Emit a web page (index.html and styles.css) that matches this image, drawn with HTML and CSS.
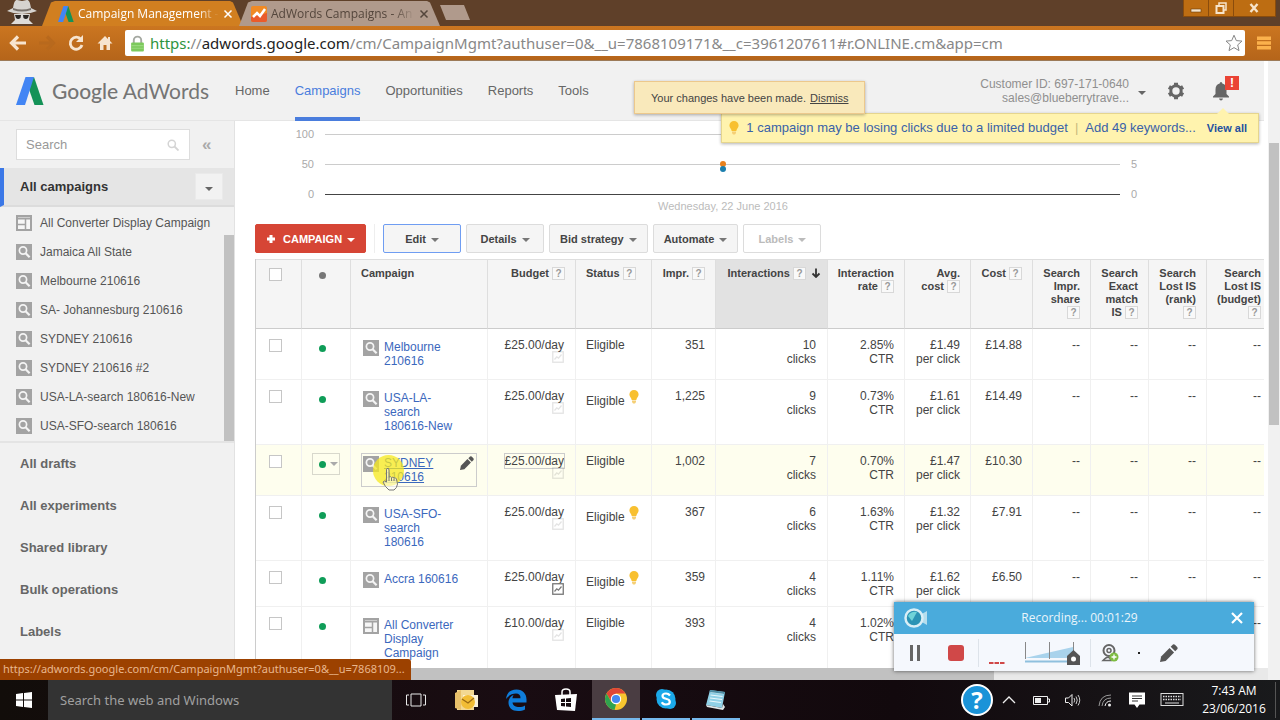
FILE: index.html
```html
<!DOCTYPE html>
<html lang="en">
<head>
  <meta charset="UTF-8">
  <title>Campaign Management - Google AdWords</title>
  <link rel="stylesheet" href="styles.css">
</head>
<body>
  <!-- shared icons -->
  <svg class="sprite" aria-hidden="true">
    <symbol id="i-search" viewBox="0 0 16 16"><rect width="16" height="16" fill="#a3a3a3"/><circle cx="7" cy="6.5" r="3.6" fill="none" stroke="#f4f4f4" stroke-width="1.7"/><path d="M9.6 9.2L13.6 13.2" stroke="#f4f4f4" stroke-width="2.2"/></symbol>
    <symbol id="i-display" viewBox="0 0 16 16"><rect x="1" y="1" width="14" height="14" fill="#f6f6f6" stroke="#a3a3a3" stroke-width="2"/><path d="M1 3.5H15" stroke="#a3a3a3" stroke-width="2"/><path d="M9.5 4V15M2 9.5H9.5" stroke="#a3a3a3" stroke-width="1.5"/></symbol>
    <symbol id="i-bulb" viewBox="0 0 10 14"><path d="M5 0A4.6 4.6 0 0 1 9.6 4.6C9.6 7 7.6 7.8 7.3 10H2.7C2.4 7.8.4 7 .4 4.6A4.6 4.6 0 0 1 5 0Z" fill="#f8c030"/><path d="M3 10.5H7V12L6 13.5H4L3 12Z" fill="#f5cf75"/></symbol>
    <symbol id="i-chart" viewBox="0 0 12 12"><rect x=".75" y=".75" width="10.5" height="10.5" fill="#fff" stroke="#777" stroke-width="1.3"/><path d="M2.5 8.5L4.8 5.8L6.5 7.2L9.5 3.5" fill="none" stroke="#777" stroke-width="1.2"/></symbol>
    <symbol id="i-adwords" viewBox="0 0 28 28"><path d="M18 0L27.5 28H18.5L11.5 8Z" fill="#149257"/><path d="M9.5 0H18L9 28H0Z" fill="#4285f4"/></symbol>
    <symbol id="i-pencil" viewBox="0 0 16 16"><path d="M0 16L1 11L8.500 3.500L12.500 7.500L5 15Z" fill="#555"/><path d="M9.500 2.500L11.500.500Q12.500 0 13.300.700L15.300 2.700Q16 3.500 15.500 4.500L13.500 6.500Z" fill="#555"/></symbol>
    <symbol id="i-close" viewBox="0 0 10 10"><path d="M1.5 1.5L8.5 8.5M8.5 1.5L1.5 8.5" stroke="currentColor" stroke-width="1.5"/></symbol>
  </svg>

  <!-- browser window -->
  <div class="tabstrip">
    <svg class="incognito" viewBox="0 0 32 24"><path d="M7 8C8 2 9 0 11 0C13 0 14 1 16 1C18 1 19 0 21 0C23 0 24 2 25 8L31 11Q24 14 16 14Q8 14 1 11Z" fill="#d6d3cf"/><path d="M7 10Q16 13 25 10V8Q16 11 7 8Z" fill="#77706a"/><path d="M8 14H24L23 20L27 24H5L9 20Z" fill="#dedbd8"/><path d="M9 15H15L14.5 18Q12 20 10 18ZM17 15H23L22 18Q20 20 17.5 18Z" fill="#2b2724"/></svg>
    <div class="tab active">
      <svg class="tab-icon"><use href="#i-adwords"/></svg>
      <span class="tab-title">Campaign Management -</span>
      <button class="tab-close" aria-label="Close tab"><svg><use href="#i-close"/></svg></button>
    </div>
    <div class="tab">
      <svg class="tab-icon" viewBox="0 0 16 16"><rect width="16" height="16" rx="2" fill="#f08a24"/><path d="M0 11L16 7V14Q16 16 14 16H2Q0 16 0 14Z" fill="#ea5b2b"/><path d="M2 11L6 7L9 10L14 3" fill="none" stroke="#fff" stroke-width="2.5"/></svg>
      <span class="tab-title">AdWords Campaigns - An</span>
      <button class="tab-close" aria-label="Close tab"><svg><use href="#i-close"/></svg></button>
    </div>
    <button class="new-tab" aria-label="New tab"></button>
    <div class="window-buttons">
      <button aria-label="Minimize"><svg viewBox="0 0 12 12"><rect x="1" y="7" width="10" height="3" fill="#f6e4cb" stroke="#6b3c08" stroke-width=".6"/></svg></button>
      <button aria-label="Restore"><svg viewBox="0 0 12 12"><path d="M4 3V1H11V8H9" fill="none" stroke="#f6e4cb" stroke-width="1.5"/><rect x="1.5" y="4" width="7" height="7" fill="none" stroke="#f6e4cb" stroke-width="2"/></svg></button>
      <button class="wide" aria-label="Close"><svg viewBox="0 0 12 12"><path d="M2.5 2L9.5 10M9.5 2L2.5 10" stroke="#f6e4cb" stroke-width="2.4"/></svg></button>
    </div>
  </div>
  <div class="toolbar">
    <button aria-label="Back"><svg viewBox="0 0 18 18"><path d="M9 2.5L2.5 9L9 15.5M3 9H17" fill="none" stroke="#f7e4cf" stroke-width="3.2"/></svg></button>
    <button aria-label="Forward"><svg viewBox="0 0 18 18"><path d="M9 2.5L15.5 9L9 15.5M15 9H1" fill="none" stroke="#b8691d" stroke-width="3.2"/></svg></button>
    <button aria-label="Reload"><svg viewBox="0 0 18 18"><path d="M14 5.5A6 6 0 1 0 15 11" fill="none" stroke="#f7e4cf" stroke-width="2.8"/><path d="M16 1V8H9Z" fill="#f7e4cf"/></svg></button>
    <button aria-label="Home"><svg viewBox="0 0 18 18"><path d="M9 2L1.5 9.5H4V16H7.5V11H10.5V16H14V9.5H16.5L14 7V3H12V5Z" fill="#f7e4cf"/></svg></button>
    <div class="address">
      <svg class="lock" viewBox="0 0 14 16"><path d="M3.5 8V5A3.5 3.5 0 0 1 10.5 5V8" fill="none" stroke="#a5a9a2" stroke-width="1.8"/><rect x="1" y="7" width="12" height="8.5" rx="1" fill="#7cc95c"/><path d="M1 10H13M1 12.5H13" stroke="#98d97d"/></svg>
      <span class="url"><span class="scheme">https:</span>//<b>adwords.google.com</b>/cm/CampaignMgmt?authuser=0&amp;__u=7868109171&amp;__c=3961207611#r.ONLINE.cm&amp;app=cm</span>
      <svg class="star" viewBox="0 0 18 18"><path d="M9 1.2L11.3 6.6L17 7.1L12.7 10.9L14 16.6L9 13.6L4 16.6L5.3 10.9L1 7.1L6.7 6.6Z" fill="#fff" stroke="#888"/></svg>
    </div>
    <button class="menu" aria-label="Menu"><svg viewBox="0 0 16 16"><path d="M0 2.5H16M0 8H16M0 13.5H16" stroke="#fbb14c" stroke-width="4"/></svg></button>
  </div>

  <div class="page">
    <div class="document">
      <div class="app-header">
        <svg class="logo"><use href="#i-adwords"/></svg>
        <div class="brand"><b>Google</b> AdWords</div>
        <nav>
          <a href="#">Home</a>
          <a href="#" class="active">Campaigns</a>
          <a href="#">Opportunities</a>
          <a href="#">Reports</a>
          <a href="#">Tools</a>
        </nav>
        <div class="account">Customer ID: 697-171-0640<br>sales@blueberrytrave...</div>
        <button class="caret-button" aria-label="Switch account"><i class="caret"></i></button>
        <button class="gear" aria-label="Settings"><svg viewBox="0 0 18 18"><circle cx="9" cy="9" r="5.2" fill="none" stroke="#666" stroke-width="3"/><path d="M9 .8V4M9 14V17.2M1.9 4.9L4.7 6.5M13.3 11.5L16.1 13.1M1.9 13.1L4.7 11.5M13.3 6.5L16.1 4.9" stroke="#666" stroke-width="4"/></svg></button>
        <button class="bell" aria-label="Notifications"><svg viewBox="0 0 18 20"><path d="M9 1Q10.3 1 10.3 2.6Q14.5 3.8 14.5 8.5V13L17 15.5V16.5H1V15.5L3.5 13V8.5Q3.5 3.8 7.7 2.6Q7.7 1 9 1Z" fill="#666"/><path d="M7 17.5H11Q10.5 19.5 9 19.5Q7.5 19.5 7 17.5Z" fill="#666"/></svg><span class="badge">!</span></button>
      </div>

      <div class="toast">Your changes have been made. <a href="#">Dismiss</a></div>
      <div class="tip">
        <svg class="bulb"><use href="#i-bulb"/></svg>
        <a href="#">1 campaign may be losing clicks due to a limited budget</a>
        <span class="bar">|</span>
        <a href="#">Add 49 keywords...</a>
        <a href="#" class="view-all">View all</a>
      </div>

      <div class="columns">
        <aside class="sidebar">
          <div class="side-search">
            <label class="search-box">
              <input type="text" placeholder="Search" aria-label="Search">
              <svg viewBox="0 0 12 12"><circle cx="4.8" cy="4.8" r="3.6" fill="none" stroke="#d4d4d4" stroke-width="1.5"/><path d="M7.5 7.5L11.5 11.5" stroke="#d4d4d4" stroke-width="1.8"/></svg>
            </label>
            <button class="collapse" aria-label="Collapse">«</button>
          </div>
          <div class="side-current">
            <span>All campaigns</span>
            <button aria-label="Filter campaigns"><i class="caret"></i></button>
          </div>
          <div class="tree">
            <div class="tree-list">
              <a href="#"><svg><use href="#i-display"/></svg>All Converter Display Campaign</a>
              <a href="#"><svg><use href="#i-search"/></svg>Jamaica All State</a>
              <a href="#"><svg><use href="#i-search"/></svg>Melbourne 210616</a>
              <a href="#"><svg><use href="#i-search"/></svg>SA- Johannesburg 210616</a>
              <a href="#"><svg><use href="#i-search"/></svg>SYDNEY 210616</a>
              <a href="#"><svg><use href="#i-search"/></svg>SYDNEY 210616 #2</a>
              <a href="#"><svg><use href="#i-search"/></svg>USA-LA-search 180616-New</a>
              <a href="#"><svg><use href="#i-search"/></svg>USA-SFO-search 180616</a>
            </div>
            <div class="tree-scroll"></div>
          </div>
          <div class="side-links">
            <a href="#">All drafts</a>
            <a href="#">All experiments</a>
            <a href="#">Shared library</a>
            <a href="#">Bulk operations</a>
            <a href="#">Labels</a>
          </div>
        </aside>

        <main>
          <div class="chart">
            <div class="axis"><span>100</span><i></i><span></span></div>
            <div class="axis"><span>50</span><i></i><span>5</span></div>
            <div class="axis base"><span>0</span><i></i><span>0</span></div>
            <div class="point orange"></div>
            <div class="point blue"></div>
          </div>
          <div class="chart-date">Wednesday, 22 June 2016</div>

          <div class="actions">
            <button class="primary"><svg viewBox="0 0 10 10"><path d="M5 1V9M1 5H9" stroke="#fff" stroke-width="3"/></svg>CAMPAIGN<i class="caret"></i></button>
            <span class="divider"></span>
            <button class="focused">Edit<i class="caret"></i></button>
            <button>Details<i class="caret"></i></button>
            <button>Bid strategy<i class="caret"></i></button>
            <button>Automate<i class="caret"></i></button>
            <button disabled>Labels<i class="caret"></i></button>
          </div>

          <table>
            <colgroup>
              <col class="c-check"><col class="c-dot"><col class="c-name"><col class="c-budget"><col class="c-status"><col class="c-impr"><col class="c-inter"><col class="c-rate"><col class="c-avg"><col class="c-cost"><col class="c-is"><col class="c-is"><col class="c-is"><col>
            </colgroup>
            <thead>
              <tr>
                <th class="check"><input type="checkbox" aria-label="Select all"></th>
                <th class="state"><i class="dot"></i></th>
                <th class="left">Campaign</th>
                <th>Budget <span class="help">?</span></th>
                <th class="left">Status <span class="help">?</span></th>
                <th>Impr. <span class="help">?</span></th>
                <th class="sorted">Interactions <span class="help">?</span> <svg class="arrow" viewBox="0 0 10 10"><path d="M5 .5V9M1.5 5.5L5 9L8.5 5.5" fill="none" stroke="#333" stroke-width="1.8"/></svg></th>
                <th>Interaction<br>rate <span class="help">?</span></th>
                <th>Avg.<br>cost <span class="help">?</span></th>
                <th>Cost <span class="help">?</span></th>
                <th>Search<br>Impr.<br>share<br><span class="help">?</span></th>
                <th>Search<br>Exact<br>match<br>IS <span class="help">?</span></th>
                <th>Search<br>Lost IS<br>(rank)<br><span class="help">?</span></th>
                <th class="last">Search<br>Lost IS<br>(budget)<br><span class="help">?</span></th>
              </tr>
            </thead>
            <tbody>
              <tr>
                <td class="check"><input type="checkbox" aria-label="Melbourne 210616"></td>
                <td class="state"><i class="dot"></i></td>
                <td class="name"><div><svg><use href="#i-search"/></svg><a href="#">Melbourne 210616</a></div></td>
                <td class="budget">£25.00/day<svg class="sim faint"><use href="#i-chart"/></svg></td>
                <td class="left">Eligible</td>
                <td>351</td><td class="clicks">10<br>clicks</td><td>2.85%<br>CTR</td><td>£1.49<br>per click</td><td>£14.88</td>
                <td>--</td><td>--</td><td>--</td><td class="last">--</td>
              </tr>
              <tr>
                <td class="check"><input type="checkbox" aria-label="USA-LA-search 180616-New"></td>
                <td class="state"><i class="dot"></i></td>
                <td class="name"><div><svg><use href="#i-search"/></svg><a href="#">USA-LA-search 180616-New</a></div></td>
                <td class="budget">£25.00/day<svg class="sim faint"><use href="#i-chart"/></svg></td>
                <td class="left">Eligible <svg class="bulb"><use href="#i-bulb"/></svg></td>
                <td>1,225</td><td class="clicks">9<br>clicks</td><td>0.73%<br>CTR</td><td>£1.61<br>per click</td><td>£14.49</td>
                <td>--</td><td>--</td><td>--</td><td class="last">--</td>
              </tr>
              <tr class="hover">
                <td class="check"><input type="checkbox" aria-label="SYDNEY 210616"></td>
                <td class="state"><button aria-label="Change status"><i class="dot"></i><i class="caret"></i></button></td>
                <td class="name">
                  <div><svg><use href="#i-search"/></svg><a href="#">SYDNEY 210616</a><svg class="edit"><use href="#i-pencil"/></svg></div>
                  <span class="spot"></span>
                  <svg class="hand" viewBox="0 0 17 24"><path d="M5 1.5Q7 .5 7 3V10Q8.5 9 9.5 10.5Q11 9.5 12 11Q13.5 10.2 14.5 12L15.5 17Q15 21 12 23H7Q3 20 1 15Q2 13 4.5 15V3Q4.5 2 5 1.5Z" fill="#fff" fill-opacity=".5" stroke="#777"/><path d="M7 10V14M9.5 11V14M12 11.5V14" stroke="#777"/></svg>
                </td>
                <td class="budget"><span class="boxed">£25.00/day</span><svg class="sim faint"><use href="#i-chart"/></svg></td>
                <td class="left">Eligible</td>
                <td>1,002</td><td class="clicks">7<br>clicks</td><td>0.70%<br>CTR</td><td>£1.47<br>per click</td><td>£10.30</td>
                <td>--</td><td>--</td><td>--</td><td class="last">--</td>
              </tr>
              <tr>
                <td class="check"><input type="checkbox" aria-label="USA-SFO-search 180616"></td>
                <td class="state"><i class="dot"></i></td>
                <td class="name"><div><svg><use href="#i-search"/></svg><a href="#">USA-SFO-search 180616</a></div></td>
                <td class="budget">£25.00/day<svg class="sim faint"><use href="#i-chart"/></svg></td>
                <td class="left">Eligible <svg class="bulb"><use href="#i-bulb"/></svg></td>
                <td>367</td><td class="clicks">6<br>clicks</td><td>1.63%<br>CTR</td><td>£1.32<br>per click</td><td>£7.91</td>
                <td>--</td><td>--</td><td>--</td><td class="last">--</td>
              </tr>
              <tr>
                <td class="check"><input type="checkbox" aria-label="Accra 160616"></td>
                <td class="state"><i class="dot"></i></td>
                <td class="name"><div><svg><use href="#i-search"/></svg><a href="#">Accra 160616</a></div></td>
                <td class="budget">£25.00/day<svg class="sim"><use href="#i-chart"/></svg></td>
                <td class="left">Eligible <svg class="bulb"><use href="#i-bulb"/></svg></td>
                <td>359</td><td class="clicks">4<br>clicks</td><td>1.11%<br>CTR</td><td>£1.62<br>per click</td><td>£6.50</td>
                <td>--</td><td>--</td><td>--</td><td class="last">--</td>
              </tr>
              <tr>
                <td class="check"><input type="checkbox" aria-label="All Converter Display Campaign"></td>
                <td class="state"><i class="dot"></i></td>
                <td class="name"><div><svg><use href="#i-display"/></svg><a href="#">All Converter Display Campaign</a></div></td>
                <td class="budget">£10.00/day<svg class="sim faint"><use href="#i-chart"/></svg></td>
                <td class="left">Eligible</td>
                <td>393</td><td class="clicks">4<br>clicks</td><td>1.02%<br>CTR</td><td></td><td></td>
                <td></td><td></td><td></td><td class="last">--</td>
              </tr>
            </tbody>
          </table>
        </main>
      </div>
      <div class="hscroll"><div></div></div>
    </div>
    <div class="vscroll"><div></div></div>
    <div class="status-bubble">https://adwords.google.com/cm/CampaignMgmt?authuser=0&amp;__u=7868109...</div>

    <!-- recorder window -->
    <div class="recorder">
      <div class="rec-title">
        <svg class="rec-logo" viewBox="0 0 24 20"><path d="M16 7L23 3V17L16 13Z" fill="#b5deee"/><circle cx="10" cy="10" r="8.5" fill="#2b93b5" stroke="#d9eef6" stroke-width="2.5"/><path d="M4 8Q7 3 13 4L8 13Z" fill="#6fd3d8"/></svg>
        <span>Recording... 00:01:29</span>
        <button aria-label="Close recorder"><svg viewBox="0 0 12 12"><path d="M1 1L11 11M11 1L1 11" stroke="#fff" stroke-width="2.2"/></svg></button>
      </div>
      <div class="rec-body">
        <button aria-label="Pause"><svg viewBox="0 0 18 18"><path d="M5.5 1V17M12.5 1V17" stroke="#666" stroke-width="3"/></svg></button>
        <button aria-label="Stop"><svg viewBox="0 0 18 18"><rect x="1" y="1" width="16" height="16" rx="3" fill="#d04848"/></svg></button>
        <span class="rec-line"></span>
        <svg class="level" viewBox="0 0 16 4"><path d="M0 2H4.5M5.5 2H10M11 2H15.5" stroke="#d04848" stroke-width="2"/></svg>
        <svg class="volume" viewBox="0 0 56 24"><path d="M0 17L48 6V17Z" fill="#a9d3ec"/><path d="M0 20.5H50" stroke="#8fc0de" stroke-width="2"/><path d="M.5 1V18M24.5 1V18M48.5 1V10" stroke="#888"/><path d="M42 15L48.5 9L55 15V24H42Z" fill="#555"/><circle cx="48.5" cy="18" r="2.5" fill="#fff"/></svg>
        <span class="rec-line"></span>
        <button class="webcam" aria-label="Webcam"><svg viewBox="0 0 18 18"><circle cx="8" cy="6.5" r="5.5" fill="none" stroke="#666" stroke-width="2"/><circle cx="8" cy="6.5" r="2" fill="none" stroke="#666" stroke-width="1.5"/><path d="M2 16.5Q8 10 10 16.5Z" fill="none" stroke="#666" stroke-width="1.5"/><circle cx="13" cy="13" r="4.5" fill="#7dbb42"/><path d="M13 10.5V15.5M10.5 13H15.5" stroke="#fff" stroke-width="1.3"/></svg></button>
        <span class="rec-dot"></span>
        <button aria-label="Draw"><svg><use href="#i-pencil"/></svg></button>
      </div>
    </div>
  </div>

  <!-- windows taskbar -->
  <div class="taskbar">
    <button class="start" aria-label="Start"><svg viewBox="0 0 16 16"><path d="M0 2L7 1V7.5H0ZM8 .9L16 0V7.5H8ZM0 8.5H7V15L0 14ZM8 8.5H16V16L8 15Z" fill="#fff"/></svg></button>
    <input class="win-search" type="text" placeholder="Search the web and Windows" aria-label="Search the web and Windows">
    <button class="app" aria-label="Task view"><svg viewBox="0 0 24 24"><path d="M7 6H17V18H7ZM5 7H2.5V17H5M19 7H21.5V17H19" fill="none" stroke="#e8e8e8"/></svg></button>
    <button class="app" aria-label="Outlook"><svg viewBox="0 0 24 24"><path d="M3 2H20V22H3Z" fill="#f3d892"/><path d="M1 5L7 2V22L1 20Z" fill="#e8c06a"/><path d="M9 7H24V19H9Z" fill="#fbf2da"/><circle cx="14" cy="14" r="7" fill="#f2bd35"/><path d="M8 11L14 15L20 10" fill="none" stroke="#9b6b13" stroke-width="1.3"/></svg></button>
    <button class="app" aria-label="Edge"><svg viewBox="0 0 24 24"><path d="M2 11C3 4 7 1.5 12.5 1.5C19 1.5 22.5 6 22.5 11.5V14.5H8.5C9 18 12 19 15 19C17.5 19 19.5 18.3 21 17.4V21.5C19 22.6 16.5 23 14 23C8 23 4.5 19.5 4.5 14.5C4.5 11 6.5 8.3 9.8 6.8C8.9 8 8.6 9 8.5 10.2H16.5C16.5 7 15 5.5 12 5.5C8 5.5 4.5 7.5 2 11Z" fill="#0f7dda"/></svg></button>
    <button class="app" aria-label="Store"><svg viewBox="0 0 24 24"><path d="M1 7L23 6L21 23L3 22Z" fill="#fff"/><path d="M8 7V4Q8 1 12 1Q16 1 16 4V7" fill="none" stroke="#fff" stroke-width="1.5"/><path d="M7 11L11 10.5V14H7ZM12 10.4L17 10V14H12ZM7 15H11V18.5L7 18ZM12 15H17V19L12 18.6Z" fill="#150c10"/></svg></button>
    <button class="app current" aria-label="Chrome"><svg viewBox="0 0 24 24"><circle cx="12" cy="12" r="11" fill="#f7c52f"/><path d="M2.5 6.5A11 11 0 0 1 21.5 6.5H12L7.2 14.5Z" fill="#e04636"/><path d="M2.5 6.5L7.2 14.7L12 17.5L10.5 22.9A11 11 0 0 1 2.5 6.5Z" fill="#2fa34f"/><circle cx="12" cy="12" r="5.2" fill="#fff"/><circle cx="12" cy="12" r="4.1" fill="#4688f1"/></svg></button>
    <button class="app running" aria-label="Skype"><svg viewBox="0 0 24 24"><circle cx="8" cy="8" r="6" fill="#1ba9e9"/><circle cx="16" cy="16" r="6" fill="#1ba9e9"/><circle cx="12" cy="12" r="9.5" fill="#1ba9e9"/><path d="M16 8.5Q14.5 6.5 12 6.5Q8.5 6.5 8.5 9Q8.5 11 12 11.8Q15.8 12.6 15.8 15Q15.8 17.5 12 17.5Q9 17.5 7.8 15.2" fill="none" stroke="#fff" stroke-width="2.2"/></svg></button>
    <button class="app running" aria-label="Notepad"><svg viewBox="0 0 24 24"><path d="M6 3L21 5L18 21L2 18Z" fill="#8fd0e6"/><path d="M7 5L19 6.5M6.5 8L18.5 9.5M6 11L18 12.5M5.5 14L17 15.5" stroke="#e9f7fb" stroke-width="1.2"/><path d="M6 3L21 5L20.5 7L5.5 5Z" fill="#4d8ca3"/><path d="M2 18L18 21L19 17L21 20L19 23L3 20Z" fill="#dfe8ea"/></svg></button>
    <div class="tray">
      <span class="help-orb">?</span>
      <svg viewBox="0 0 20 20"><path d="M4 13L10 7L16 13" fill="none" stroke="#eee" stroke-width="1.3"/></svg>
      <svg viewBox="0 0 20 20"><path d="M2.5 6.5H16.5V14.5H2.5ZM17 9H18.5V12H17" fill="none" stroke="#eee"/><rect x="4" y="8" width="6" height="5" fill="#eee"/></svg>
      <svg viewBox="0 0 20 20"><path d="M2.5 8H5.5L9 4.5V16L5.5 12.5H2.5Z" fill="none" stroke="#eee"/><path d="M11 8Q12.5 10 11 12.5M13 6.5Q15.5 10 13 14M15 5Q18.5 10 15 15.5" fill="none" stroke="#ccc"/></svg>
      <svg viewBox="0 0 20 20"><g fill="none" stroke="#999"><path d="M4 16Q5 5 16 5"/><path d="M7 16Q8 8 16 8"/><path d="M10 16Q11 11 16 11" stroke="#eee"/></g><circle cx="14.5" cy="15" r="1.5" fill="#eee"/></svg>
      <svg viewBox="0 0 20 20"><path d="M2 2.5H18V14.5H12.5L10 18L7.5 14.5H2Z" fill="#fff"/><path d="M5 6H15M5 8.5H15M5 11H11" stroke="#333"/></svg>
      <svg class="kbd" viewBox="0 0 24 16"><rect x="1" y="1.5" width="22" height="12" fill="none" stroke="#ddd"/><path d="M3 4.5H21M3 7.5H21" stroke="#ddd" stroke-width="1.5" stroke-dasharray="1.5 1"/><path d="M5 11H19" stroke="#ddd"/></svg>
      <div class="clock">7:43 AM<br>23/06/2016</div>
    </div>
  </div>
</body>
</html>
```
FILE: styles.css
```css
* {
  box-sizing: border-box;
}
body {
  margin: 0;
  height: 100vh;
  display: flex;
  flex-direction: column;
  overflow: hidden;
  font-family: "Liberation Sans", Arial, sans-serif;
  font-size: 12px;
  line-height: 14px;
  color: #444;
  background: #fff;
}
button {
  border: 0;
  padding: 0;
  background: none;
  font: inherit;
  color: inherit;
}
a {
  color: inherit;
  text-decoration: none;
}
svg {
  display: block;
  flex: none;
}
.sprite {
  position: absolute;
  width: 0;
  height: 0;
}
.caret {
  display: inline-block;
  border: 4px solid transparent;
  border-top-color: currentColor;
  border-bottom: 0;
}

/* browser */
.tabstrip {
  height: 26px;
  flex: none;
  display: flex;
  align-items: flex-end;
  background: #5f4029;
  font-family: "Open Sans", sans-serif;
}
.incognito {
  width: 32px;
  height: 24px;
  margin: 0 4px 2px 6px;
}
.tab {
  width: 201px;
  height: 25px;
  margin-right: -4px;
  padding: 0 11px 0 12px;
  display: flex;
  align-items: center;
  gap: 4px;
  background: #b09a8c;
  color: #54463c;
  clip-path: polygon(0 100%, 9px 6%, 13px 0, 188px 0, 191px 6%, 100% 100%);
}
.tab.active {
  padding-left: 16px;
  background: #d17f20;
  color: #fff;
}
.tab-icon {
  width: 16px;
  height: 16px;
}
.tab-title {
  flex: 1;
  white-space: nowrap;
  -webkit-mask-image: linear-gradient(to right, #000 85%, transparent);
  mask-image: linear-gradient(to right, #000 85%, transparent);
}
.tab-close svg {
  width: 10px;
  height: 10px;
}
.new-tab {
  width: 30px;
  height: 15px;
  margin: 0 0 6px 4px;
  background: #b09a8c;
  clip-path: polygon(0 0, 24px 0, 100% 100%, 6px 100%);
}
.window-buttons {
  margin: 0 4px 0 auto;
  align-self: flex-start;
  display: flex;
  border: 1px solid #8a4c0c;
  border-top: 0;
}
.window-buttons button {
  width: 25px;
  height: 16px;
  padding: 2px 6px;
  background: #bd6d12;
  border-right: 1px solid #8a4c0c;
}
.window-buttons .wide {
  width: 41px;
  padding: 2px 14px;
  border-right: 0;
}
.window-buttons svg {
  width: 12px;
  height: 12px;
}
.toolbar {
  height: 35px;
  flex: none;
  display: flex;
  align-items: center;
  gap: 11px;
  padding: 0 8px 0 9px;
  background: linear-gradient(#cb7620, #b5651a);
  border-bottom: 1px solid #9c7a58;
}
.toolbar svg {
  width: 18px;
  height: 18px;
}
.address {
  flex: 1;
  height: 26px;
  padding: 0 2px 0 5px;
  display: flex;
  align-items: center;
  gap: 5px;
  background: #fff;
  border-radius: 2px;
  font-family: "Noto Sans", sans-serif;
  font-size: 15px;
  line-height: 24px;
  color: #888;
}
.toolbar .lock {
  width: 15px;
  height: 17px;
}
.address .star {
  margin-left: auto;
}
.url b {
  font-weight: 400;
  color: #222;
}
.scheme {
  color: #2e9440;
}
.url {
  white-space: nowrap;
}
.menu svg {
  width: 16px;
  height: 14px;
}

/* page frame */
.page {
  flex: 1;
  min-height: 0;
  display: flex;
  position: relative;
}
.document {
  flex: 1;
  min-width: 0;
  display: flex;
  flex-direction: column;
}
.vscroll {
  width: 12px;
  padding: 82px 1px 0;
  background: #f1f1f1;
}
.vscroll div {
  height: 282px;
  background: #c1c1c1;
}
.hscroll {
  height: 12px;
  flex: none;
  background: #e9e9e9;
}
.hscroll div {
  width: 994px;
  height: 12px;
  background: #c1c1c1;
}

/* app header */
.app-header {
  height: 60px;
  flex: none;
  margin-right: 4px;
  padding-left: 16px;
  display: flex;
  align-items: center;
  background: #f1f1f1;
  border-bottom: 1px solid #e5e5e5;
  color: #666;
}
.logo {
  width: 28px;
  height: 28px;
}
.brand {
  width: 156px;
  margin: 0 27px 0 8px;
  font-family: Lato, sans-serif;
  font-size: 21px;
  line-height: 28px;
  white-space: nowrap;
  color: #757575;
}
.brand b {
  font-weight: 500;
}
nav {
  display: flex;
  align-self: stretch;
  gap: 25px;
  margin-bottom: -1px;
  font-size: 13px;
}
nav a {
  line-height: 60px;
}
nav .active {
  color: #4a7ddd;
  border-bottom: 4px solid #4a7ddd;
}
.account {
  margin-left: auto;
  text-align: right;
  color: #8f8f8f;
}
.caret-button {
  margin: 0 21px 0 9px;
}
.gear {
  margin-right: 27px;
}
.gear svg {
  width: 18px;
  height: 18px;
}
.bell {
  position: relative;
  margin-right: 34px;
}
.bell svg {
  width: 18px;
  height: 20px;
}
.badge {
  position: absolute;
  top: -5px;
  left: 13px;
  width: 14px;
  height: 14px;
  background: #ea4335;
  color: #fff;
  font-weight: bold;
}
.toast {
  position: absolute;
  top: 20px;
  left: 634px;
  z-index: 2;
  padding: 9px 15px 8px 16px;
  background: #f9e9bb;
  border: 1px solid #ecc88c;
  box-shadow: 0 1px 3px rgba(0, 0, 0, 0.3);
  font-size: 11px;
  color: #444;
}
.toast a {
  margin-left: 1px;
  text-decoration: underline;
}
.tip {
  position: absolute;
  top: 52px;
  right: 21px;
  z-index: 1;
  height: 30px;
  padding: 0 11px 0 7px;
  display: flex;
  align-items: center;
  gap: 7px;
  background: #fff3ae;
  border: 1px solid #e5d58e;
  box-shadow: 0 1px 3px rgba(0, 0, 0, 0.3);
  font-size: 13px;
  color: #3a62a8;
}
.tip::after {
  content: "";
  position: absolute;
  top: -6px;
  right: 29px;
  border: 6px solid transparent;
  border-top: 0;
  border-bottom-color: #fff3ae;
}
.tip .bar {
  color: #c9b97d;
}
.tip .view-all {
  margin-left: 4px;
  font-size: 11px;
  font-weight: bold;
  color: #2450a0;
}
.bulb {
  width: 10px;
  height: 14px;
}

/* sidebar */
.columns {
  flex: 1;
  min-height: 0;
  display: flex;
  overflow: hidden;
}
.sidebar {
  width: 235px;
  flex: none;
  background: #f1f1f1;
  border-right: 1px solid #e2e2e2;
}
.side-search {
  padding: 8px 16px;
  display: flex;
  align-items: center;
}
.search-box {
  width: 174px;
  height: 31px;
  padding: 0 10px 0 9px;
  display: flex;
  align-items: center;
  background: #fff;
  border: 1px solid #ddd;
}
.search-box input {
  flex: 1;
  min-width: 0;
  padding: 0;
  border: 0;
  font: inherit;
  font-size: 13px;
}
input::placeholder {
  color: #999;
}
.search-box svg {
  width: 12px;
  height: 12px;
}
.collapse {
  margin-left: 12px;
  font-size: 17px;
  font-weight: bold;
  color: #aaa;
}
.side-current {
  height: 39px;
  padding: 0 11px 0 16px;
  display: flex;
  align-items: center;
  justify-content: space-between;
  background: #e5e5e5;
  border-left: 4px solid #3b78e7;
  border-bottom: 2px solid #dcdcdc;
  font-size: 13px;
  font-weight: bold;
  color: #333;
}
.side-current button {
  width: 28px;
  height: 27px;
  background: #f2f2f2;
  border: 1px solid #eaeaea;
  color: #666;
  line-height: 10px;
}
.tree {
  display: flex;
  border-bottom: 2px solid #e4e4e4;
}
.tree-list {
  flex: 1;
  padding: 1px 0;
  color: #555;
}
.tree-list a {
  height: 29px;
  padding-left: 16px;
  display: flex;
  align-items: center;
  gap: 8px;
}
.tree-list svg {
  width: 16px;
  height: 16px;
}
.tree-scroll {
  width: 10px;
  margin-top: 28px;
  background: #c1c1c1;
}
.side-links a {
  display: block;
  padding-left: 20px;
  font-size: 13px;
  font-weight: bold;
  line-height: 42px;
  color: #666;
}

/* chart */
main {
  flex: 1;
  min-width: 0;
  padding: 6px 4px 0 20px;
}
.chart {
  position: relative;
  display: grid;
  gap: 16px;
  font-size: 11px;
  color: #aaa;
}
.axis {
  display: flex;
  align-items: center;
  gap: 11px;
}
.axis span {
  width: 59px;
  text-align: right;
}
.axis span:last-child {
  width: 133px;
  text-align: left;
}
.axis i {
  flex: 1;
  height: 1px;
  background: #ccc;
}
.base i {
  background: #444;
}
.point {
  position: absolute;
  left: 465px;
  width: 6px;
  height: 6px;
  border-radius: 50%;
}
.orange {
  top: 34px;
  background: #e8811e;
}
.blue {
  top: 39px;
  background: #1c7fae;
}
.chart-date {
  padding-right: 73px;
  font-size: 11px;
  line-height: 10px;
  text-align: center;
  color: #bbb;
}

/* actions */
.actions {
  margin: 13px 0 6px;
  display: flex;
  gap: 5px;
}
.actions button {
  min-width: 78px;
  height: 29px;
  padding: 0 10px;
  background: #f5f5f5;
  border: 1px solid #dcdcdc;
  border-radius: 2px;
  font-size: 11px;
  font-weight: bold;
  color: #444;
}
.actions .caret {
  margin-left: 5px;
  vertical-align: 1px;
  border-top-color: #777;
}
.actions .primary {
  background: #d64535;
  border-color: #d64535;
  color: #fff;
}
.actions .primary svg {
  display: inline-block;
  width: 10px;
  height: 10px;
  margin-right: 7px;
  vertical-align: -1px;
}
.actions .primary .caret {
  border-top-color: #fff;
}
.divider {
  width: 1px;
  margin: 0 3px;
  background: #eee;
}
.actions .focused {
  border-color: #6f9df2;
}
.actions :disabled {
  background: #fff;
  color: #bbb;
}
.actions :disabled .caret {
  border-top-color: #bbb;
}

/* campaign table */
table {
  width: 100%;
  table-layout: fixed;
  border-collapse: separate;
  border-spacing: 0;
  border-left: 1px solid #ccc;
}
.c-check { width: 46px; }
.c-dot { width: 49px; }
.c-name { width: 137px; }
.c-budget { width: 88px; }
.c-status { width: 76px; }
.c-impr { width: 64px; }
.c-inter { width: 112px; }
.c-rate { width: 77px; }
.c-avg { width: 66px; }
.c-cost { width: 62px; }
.c-is { width: 58px; }
th, td {
  padding: 9px 10px 8px 4px;
  border-right: 1px solid #f0f0f0;
  border-bottom: 1px solid #f0f0f0;
  text-align: right;
  vertical-align: top;
  color: #444;
}
th {
  height: 70px;
  padding: 7px 10px 8px 4px;
  background: #f5f5f5;
  border-color: #dedede;
  border-top: 1px solid #dedede;
  border-bottom-color: #ccc;
  font-size: 11px;
  line-height: 13px;
  white-space: nowrap;
}
th.sorted {
  padding-right: 6px;
  background: #e2e2e2;
}
.budget, .clicks {
  padding-right: 11px;
}
th.last, td.last {
  padding-right: 3px;
  border-right: 0;
}
.left {
  padding-left: 10px;
  text-align: left;
}
.help {
  display: inline-block;
  width: 13px;
  height: 13px;
  border: 1px solid #d8d8d8;
  background: #f9f9f9;
  font-size: 10px;
  line-height: 11px;
  text-align: center;
  vertical-align: top;
  color: #999;
}
.arrow {
  display: inline-block;
  width: 10px;
  height: 10px;
  margin-left: 2px;
  vertical-align: -1px;
}
.check {
  padding-left: 13px;
  text-align: left;
}
.check input {
  appearance: none;
  display: block;
  width: 13px;
  height: 13px;
  margin: 1px 0 0;
  background: #fff;
  border: 1px solid #c6c6c6;
}
.state {
  padding: 8px 10px;
  text-align: left;
}
.dot {
  display: block;
  width: 7px;
  height: 7px;
  margin: 8px 0 0 7px;
  border-radius: 50%;
  background: #0f9d58;
}
th .dot {
  margin-top: 4px;
  background: #777;
}
.state button {
  width: 28px;
  height: 22px;
  padding-left: 6px;
  display: flex;
  align-items: center;
  gap: 4px;
  border: 1px solid #d8d8cc;
  color: #aaa;
}
.state button .dot {
  margin: 0;
}
.name {
  position: relative;
  padding: 8px 10px;
}
.name div {
  padding: 2px 2px 2px 1px;
  display: flex;
  gap: 5px;
  border: 1px solid transparent;
  text-align: left;
  color: #3b68bd;
}
.name div svg {
  width: 16px;
  height: 16px;
}
.name a {
  width: 76px;
}
.sim {
  width: 12px;
  height: 12px;
  margin: -1px 0 0 auto;
}
.faint {
  opacity: 0.2;
}
td .bulb {
  display: inline-block;
  height: 16px;
  margin: 0 0 0 1px;
}
.hover td {
  background: #fefeee;
}
.hover .name div {
  border-color: #ccc;
}
.hover .name a {
  text-decoration: underline;
}
.hover .name .edit {
  width: 14px;
  height: 14px;
  margin-left: -5px;
}
.boxed {
  outline: 1px solid #ccc;
}
.spot {
  position: absolute;
  left: 22px;
  top: 10px;
  width: 31px;
  height: 31px;
  border-radius: 50%;
  background: rgba(245, 232, 30, 0.75);
}
.hand {
  position: absolute;
  left: 31px;
  top: 22px;
  width: 17px;
  height: 24px;
}
.status-bubble {
  position: absolute;
  left: 0;
  bottom: 0;
  height: 21px;
  padding: 0 6px 0 3px;
  background: #9c4100;
  border-top-right-radius: 3px;
  font-family: "Noto Sans", sans-serif;
  font-size: 11px;
  line-height: 20px;
  color: #e9b78e;
}

/* recorder */
.recorder {
  position: absolute;
  right: 26px;
  bottom: 9px;
  z-index: 3;
  width: 360px;
  background: #f5f8fd;
  box-shadow: 0 0 4px rgba(0, 0, 0, 0.6);
}
.rec-title {
  height: 32px;
  padding: 0 11px 0 10px;
  display: flex;
  align-items: center;
  justify-content: space-between;
  background: #4aabdc;
  font-family: "Open Sans", sans-serif;
  color: #e9f5fb;
}
.rec-logo {
  width: 24px;
  height: 20px;
}
.rec-title button svg {
  width: 12px;
  height: 12px;
}
.rec-body {
  height: 37px;
  padding: 0 12px;
  display: flex;
  align-items: center;
}
.rec-body button {
  margin-right: 23px;
}
.rec-body button svg {
  width: 18px;
  height: 18px;
}
.rec-line {
  width: 1px;
  height: 28px;
  background: #dde3ea;
}
.rec-body button + .rec-line {
  margin-left: -10px;
}
.level {
  width: 16px;
  height: 4px;
  margin: 20px 20px 0 10px;
}
.volume {
  width: 56px;
  height: 24px;
  margin-right: 9px;
}
.volume + .rec-line {
  margin-right: 10px;
}
.rec-body .webcam {
  margin-right: 19px;
}
.rec-dot {
  width: 2px;
  height: 2px;
  margin-right: 20px;
  background: #222;
}

/* taskbar */
.taskbar {
  height: 40px;
  flex: none;
  display: flex;
  background: linear-gradient(to right, #120d0a, #190c12 40%, #12090d 70%, #191a1c);
  color: #fff;
  font-family: "Open Sans", sans-serif;
}
.start {
  width: 48px;
  padding: 0 16px;
}
.start svg {
  width: 16px;
  height: 16px;
}
.win-search {
  width: 344px;
  padding: 0 12px;
  border: 0;
  background: #333;
  font-family: "Noto Sans", sans-serif;
  font-size: 13px;
}
.win-search::placeholder {
  color: #a0a0a0;
}
.app {
  width: 48px;
  margin-right: 2px;
  padding: 0 12px;
}
.app svg {
  width: 24px;
  height: 24px;
}
.current {
  background: #4a3d42;
}
.current, .running {
  border-bottom: 2px solid #76b9ed;
}
.tray {
  flex: 1;
  padding-right: 4px;
  display: flex;
  align-items: center;
  justify-content: flex-end;
  gap: 12px;
}
.tray svg {
  width: 20px;
  height: 20px;
}
.tray .kbd {
  width: 24px;
  height: 16px;
  margin-left: 1px;
}
.help-orb {
  width: 32px;
  height: 32px;
  margin-right: -6px;
  border: 2px solid #fff;
  border-radius: 50%;
  background: #1a93d8;
  font-size: 24px;
  font-weight: bold;
  line-height: 28px;
  text-align: center;
}
.clock {
  width: 80px;
  border-right: 1px solid #555;
  padding-right: 3px;
  font-size: 12px;
  line-height: 18px;
  text-align: center;
}
```
